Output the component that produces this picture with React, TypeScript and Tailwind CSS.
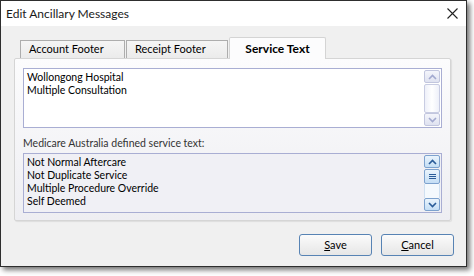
import React from "react";

const font = { fontFamily: 'Lato, "Noto Sans", sans-serif' };

const Chevron = ({ down, color }: { down?: boolean; color: string }) => (
  <svg width="9" height="6" viewBox="0 0 9 6" className={down ? "rotate-180" : ""}>
    <path d="M1 5 L4.5 1.5 L8 5" fill="none" stroke={color} strokeWidth="1.6" />
  </svg>
);

const ScrollBar = ({ active }: { active?: boolean }) => {
  const btn = active
    ? "border-[#7da2ce] bg-gradient-to-b from-[#eaf4fc] to-[#c4def5]"
    : "border-[#c2c6de] bg-gradient-to-b from-[#f4f5fb] to-[#dfe2f0]";
  const arrow = active ? "#2a5c99" : "#a2a9cf";
  return (
    <div className="flex flex-col w-[17px] h-full py-[1px] pr-[1px]">
      <div className={`h-[13px] border rounded-[2px] flex items-center justify-center ${btn}`}>
        <Chevron color={arrow} />
      </div>
      {active ? (
        <>
          <div className={`h-[15px] mt-[1px] border rounded-[2px] flex items-center justify-center ${btn}`}>
            <div className="flex flex-col gap-[1px] w-[7px]">
              <div className="h-[1px] bg-[#2a5c99]" />
              <div className="h-[1px] bg-[#2a5c99]" />
              <div className="h-[1px] bg-[#2a5c99]" />
            </div>
          </div>
          <div className="flex-1 border-x border-[#cfe0f1] bg-[#f4f9fd]" />
        </>
      ) : (
        <div className="flex-1 mt-[1px] border border-[#c8cce2] rounded-[2px] bg-gradient-to-r from-[#eef0f9] via-white to-[#eef0f9]" />
      )}
      <div className={`h-[13px] border rounded-[2px] flex items-center justify-center ${btn}`}>
        <Chevron down color={arrow} />
      </div>
    </div>
  );
};

export default function App() {
  const services = [
    "Not Normal Aftercare",
    "Not Duplicate Service",
    "Multiple Procedure Override",
    "Self Deemed",
  ];
  return (
    <div className="w-[474px] h-[276px] bg-white text-[10.5px] text-black" style={font}>
      <div className="w-[467px] h-[267px] border border-[#2e2e2e] flex flex-col shadow-[3px_3px_5px_rgba(0,0,0,0.55)]">
        <div className="h-[25px] bg-white flex items-center justify-between pl-[5px] pr-[8px]">
          <span className="text-[12px] text-[#1a1a1a]">Edit Ancillary Messages</span>
          <svg width="11" height="11" viewBox="0 0 11 11">
            <path d="M0.5 0.5 L10.5 10.5 M10.5 0.5 L0.5 10.5" stroke="#222" strokeWidth="1.1" />
          </svg>
        </div>
        <div className="flex-1 bg-[#f0f0f0] pt-[11px] pl-[13px] flex flex-col">
          <div className="flex items-end h-[21px] pl-[6px] gap-[1px]">
            <div className="w-[105px] h-[18px] border border-b-0 border-[#adadad] bg-gradient-to-b from-[#f5f5f5] to-[#ebebeb] pl-[8px] flex items-center text-[11px]">
              Account Footer
            </div>
            <div className="w-[102px] h-[18px] border border-b-0 border-[#adadad] bg-gradient-to-b from-[#f5f5f5] to-[#ebebeb] pl-[8px] flex items-center text-[11px]">
              Receipt Footer
            </div>
            <div className="relative z-10 w-[97px] h-[22px] -mb-[1px] border border-b-0 border-[#d4d4d4] rounded-t-[2px] bg-[#fcfcfd] flex items-center justify-center font-bold text-[12px]">
              Service Text
            </div>
          </div>
          <div className="w-[437px] h-[163px] border border-[#d5d5d5] rounded-[2px] bg-gradient-to-b from-[#fcfcfd] to-[#eeeef2] shadow-[1px_1px_1px_rgba(0,0,0,0.08)] pt-[9px] pl-[8px] flex flex-col">
            <div className="w-[419px] h-[60px] border border-[#a9aed3] bg-white flex">
              <div className="flex-1 pl-[3px] pt-[2px] leading-[13px]">
                <div>Wollongong Hospital</div>
                <div>Multiple Consultation</div>
              </div>
              <ScrollBar />
            </div>
            <div className="mt-[7px] h-[16px] leading-[16px] text-[#333]">Medicare Australia defined service text:</div>
            <div className="mt-[2px] w-[419px] h-[60px] border border-[#a9aed3] bg-[#f0f0f5] flex">
              <div className="flex-1 pl-[3px] pt-[2px] leading-[13px]">
                {services.map((s) => (
                  <div key={s}>{s}</div>
                ))}
              </div>
              <ScrollBar active />
            </div>
          </div>
          <div className="flex justify-end gap-[9px] mt-[13px] pr-[12px]">
            <button className="w-[73px] h-[22px] border border-[#5783b4] rounded-[3px] bg-gradient-to-b from-[#fbfbfb] to-[#e6e6e6] flex items-center justify-center text-[11px]">
              <span><u>S</u>ave</span>
            </button>
            <button className="w-[73px] h-[22px] border border-[#5783b4] rounded-[3px] bg-gradient-to-b from-[#fbfbfb] to-[#e6e6e6] flex items-center justify-center text-[11px]">
              <span><u>C</u>ancel</span>
            </button>
          </div>
        </div>
      </div>
    </div>
  );
}
